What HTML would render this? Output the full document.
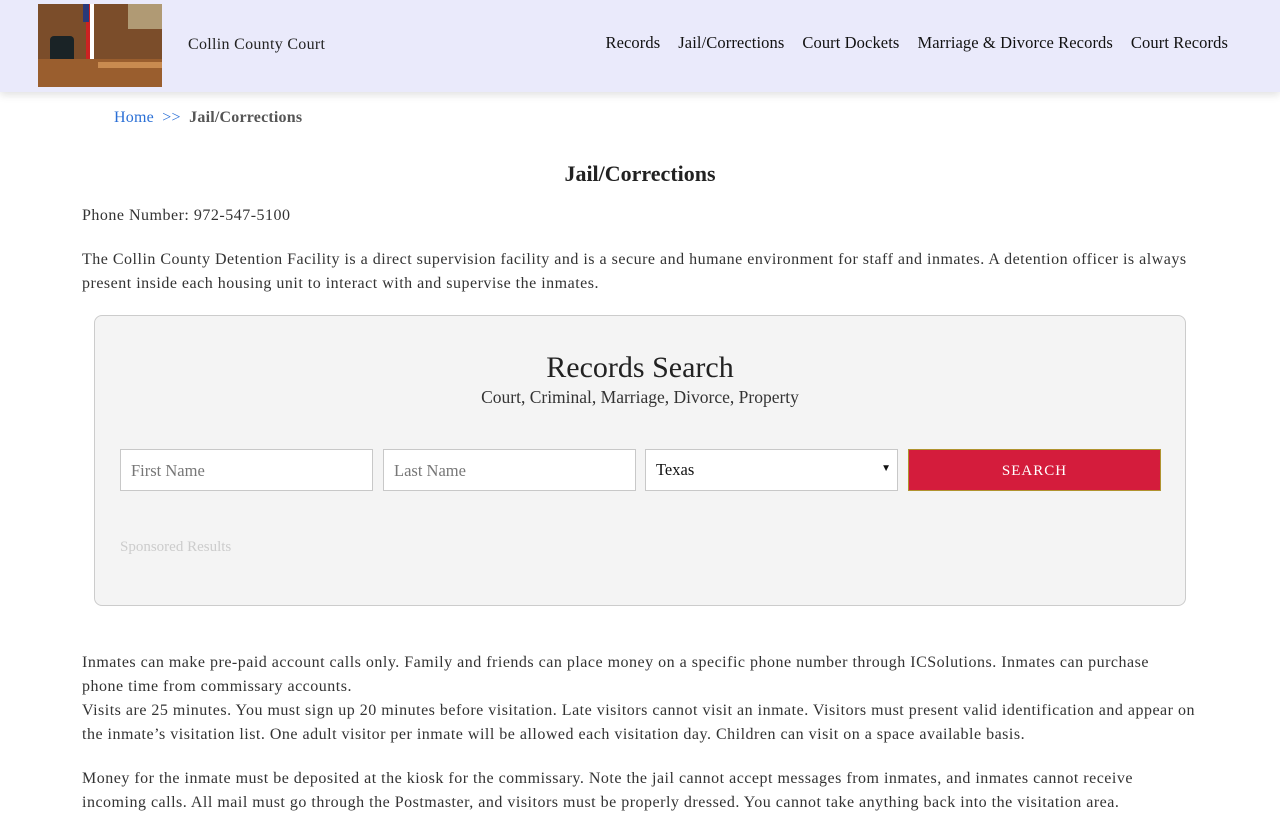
<!DOCTYPE html>
<html><head><meta charset="utf-8"><style>
*{box-sizing:border-box}
body{margin:0;background:#fff;font-family:"Liberation Serif",serif;color:#333;width:1280px;height:800px;overflow:hidden}
header{height:92px;background:#eaeafb;box-shadow:0 3px 8px rgba(0,0,0,.12);position:relative}
.logo{position:absolute;left:38px;top:4px;width:124px;height:83px;overflow:hidden}
.brand{position:absolute;left:188px;top:36px;font-size:16px;letter-spacing:.3px;color:#222}
nav{position:absolute;right:52px;top:33px;font-size:16.5px;letter-spacing:.1px;color:#111}
nav span{margin-left:18px}
.bc{position:absolute;left:114px;top:109px;font-size:16px;letter-spacing:.2px}
.bc a{color:#2a6fd6;text-decoration:none}
.bc b{color:#555}
h1{position:absolute;top:161px;width:100%;text-align:center;font-size:22px;margin:0;color:#222}
p{position:absolute;left:82px;width:1140px;margin:0;font-size:16px;letter-spacing:.5px;line-height:24px;color:#333;white-space:nowrap}
.box{position:absolute;left:94px;top:315px;width:1092px;height:291px;background:#f4f4f4;border:1px solid #ccc;border-radius:8px}
.box .t{position:absolute;top:35px;width:100%;text-align:center;font-size:30px;color:#222}
.box .s{position:absolute;top:71px;width:100%;text-align:center;font-size:17.5px;color:#333}
.in{position:absolute;top:133px;height:42px;width:253px;background:#fff;border:1px solid #c8c8c8;font-size:16.5px;color:#777;padding:11px 10px}
.btn{position:absolute;left:813px;top:133px;width:253px;height:42px;background:#d41c3c;color:#fff;text-align:center;font-size:15px;letter-spacing:1px;line-height:42px;border:1px solid #b0932f}
.sp{position:absolute;left:25px;top:223px;font-size:15px;color:#ccc}
</style></head><body>
<header>
<div class="logo"><svg width="124" height="83"><rect x="0" y="0" width="124" height="60" fill="#7b4d2a"/><rect x="90" y="0" width="34" height="25" fill="#b09a74"/><rect x="48" y="0" width="8" height="55" fill="#fff"/><rect x="48" y="0" width="4" height="55" fill="#c22"/><rect x="45" y="0" width="6" height="18" fill="#2a3a7a"/><rect x="12" y="32" width="24" height="30" rx="4" fill="#1a2326"/><rect x="0" y="55" width="124" height="28" fill="#9a5e2e"/><rect x="60" y="58" width="64" height="6" fill="#c98b50"/></svg></div>
<div class="brand">Collin County Court</div>
<nav><span>Records</span><span>Jail/Corrections</span><span>Court Dockets</span><span>Marriage &amp; Divorce Records</span><span>Court Records</span></nav>
</header>
<div class="bc"><a>Home</a> <a>&nbsp;&gt;&gt;&nbsp;</a> <b>Jail/Corrections</b></div>
<h1>Jail/Corrections</h1>
<p style="top:204px">Phone Number: 972-547-5100</p>
<p style="top:248px">The Collin County Detention Facility is a direct supervision facility and is a secure and humane environment for staff and inmates. A detention officer is always<br>present inside each housing unit to interact with and supervise the inmates.</p>
<div class="box">
<div class="t">Records Search</div>
<div class="s">Court, Criminal, Marriage, Divorce, Property</div>
<div class="in" style="left:25px">First Name</div>
<div class="in" style="left:288px">Last Name</div>
<div class="in" style="left:550px;color:#111;padding-top:10px">Texas<span style="position:absolute;right:6px;top:13px;font-size:10px">&#9660;</span></div>
<div class="btn">SEARCH</div>
<div class="sp">Sponsored Results</div>
</div>
<p style="top:651px">Inmates can make pre-paid account calls only. Family and friends can place money on a specific phone number through ICSolutions. Inmates can purchase<br>phone time from commissary accounts.<br>Visits are 25 minutes. You must sign up 20 minutes before visitation. Late visitors cannot visit an inmate. Visitors must present valid identification and appear on<br>the inmate’s visitation list. One adult visitor per inmate will be allowed each visitation day. Children can visit on a space available basis.</p>
<p style="top:767px">Money for the inmate must be deposited at the kiosk for the commissary. Note the jail cannot accept messages from inmates, and inmates cannot receive<br>incoming calls. All mail must go through the Postmaster, and visitors must be properly dressed. You cannot take anything back into the visitation area.</p>
</body></html>
